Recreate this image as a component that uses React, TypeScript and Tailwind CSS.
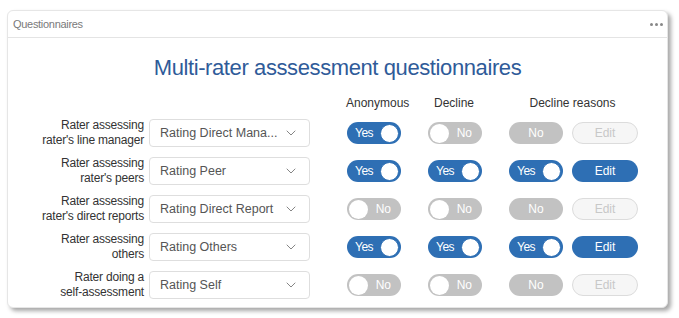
import { ChevronDown } from 'lucide-react';

interface RaterRow {
  id: string;
  label: string[];
  questionnaire: string;
  anonymous: boolean;
  decline: boolean;
  reasons: boolean;
}

const ROWS: RaterRow[] = [
  { id: 'manager', label: ['Rater assessing', "rater's line manager"], questionnaire: 'Rating Direct Mana...', anonymous: true, decline: false, reasons: false },
  { id: 'peers', label: ['Rater assessing', "rater's peers"], questionnaire: 'Rating Peer', anonymous: true, decline: true, reasons: true },
  { id: 'reports', label: ['Rater assessing', "rater's direct reports"], questionnaire: 'Rating Direct Report', anonymous: false, decline: false, reasons: false },
  { id: 'others', label: ['Rater assessing', 'others'], questionnaire: 'Rating Others', anonymous: true, decline: true, reasons: true },
  { id: 'self', label: ['Rater doing a', 'self-assessment'], questionnaire: 'Rating Self', anonymous: false, decline: false, reasons: false },
];

function Toggle({ on }: { on: boolean }) {
  if (on) {
    return (
      <div className="flex items-center justify-between w-[54px] h-[22px] rounded-full bg-[#2e6fb4] pl-[8px] pr-[2px]">
        <span className="text-[12px] text-white tracking-[-0.5px]">Yes</span>
        <span className="w-[19px] h-[19px] rounded-full bg-white border border-[#2e6fb4]"></span>
      </div>
    );
  }
  return (
    <div className="flex items-center justify-between w-[54px] h-[22px] rounded-full bg-[#c2c2c2] pl-[2px] pr-[10px]">
      <span className="w-[19px] h-[19px] rounded-full bg-white"></span>
      <span className="text-[12px] text-white">No</span>
    </div>
  );
}

function ReasonsToggle({ on }: { on: boolean }) {
  if (on) return <Toggle on />;
  return (
    <div className="flex items-center justify-center w-[54px] h-[22px] rounded-full bg-[#c2c2c2]">
      <span className="text-[12px] text-white">No</span>
    </div>
  );
}

function EditButton({ enabled }: { enabled: boolean }) {
  return enabled ? (
    <div className="flex items-center justify-center w-[66px] h-[22px] rounded-full bg-[#2e6fb4] text-[12px] text-white">Edit</div>
  ) : (
    <div className="flex items-center justify-center w-[66px] h-[22px] rounded-full bg-[#f6f6f6] border border-[#dcdcdc] text-[12px] text-[#c8c8c8]">Edit</div>
  );
}

export default function App() {
  return (
    <div className="w-[679px] h-[318px] bg-white pt-[10px] pl-[7px]" style={{ fontFamily: '"Liberation Sans", Arial, sans-serif' }}>
      <div className="w-[661px] h-[298px] bg-white border border-[#e6e6e6] rounded-[6px] shadow-[3px_3px_4px_rgba(0,0,0,0.35)]">
        <div className="flex items-center justify-between h-[27px] border-b border-[#e4e4e4] pl-[5px] pr-[4px]">
          <span className="text-[11px] text-[#7a7a7a] tracking-[-0.3px]">Questionnaires</span>
          <span className="flex gap-[2px]">
            <span className="w-[3px] h-[3px] rounded-full bg-[#888]"></span>
            <span className="w-[3px] h-[3px] rounded-full bg-[#888]"></span>
            <span className="w-[3px] h-[3px] rounded-full bg-[#888]"></span>
          </span>
        </div>
        <h1 className="text-center text-[22px] text-[#2f5b99] mt-[16px] leading-[28px] tracking-[-0.4px]">Multi-rater asssessment questionnaires</h1>
        <div className="flex text-[12px] text-[#333] mt-[13px] h-[16px] leading-[16px]">
          <div className="w-[338px]"></div>
          <div className="w-[54px] text-center">Anonymous</div>
          <div className="w-[27px]"></div>
          <div className="w-[54px] text-center">Decline</div>
          <div className="w-[27px]"></div>
          <div className="w-[129px] text-center">Decline reasons</div>
        </div>
        <div className="flex flex-col mt-[3px]">
          {ROWS.map((r) => (
            <div key={r.id} className="flex items-center h-[38px]">
              <div className="w-[136px] text-right text-[12px] leading-[15px] text-[#333] tracking-[-0.2px]">
                <div>{r.label[0]}</div>
                <div>{r.label[1]}</div>
              </div>
              <div className="ml-[5px] w-[161px] h-[28px] flex items-center justify-between border border-[#dedede] rounded-[4px] pl-[10px] pr-[10px] text-[12.5px] text-[#555]">
                <span className="whitespace-nowrap">{r.questionnaire}</span>
                <ChevronDown size={16} strokeWidth={1.2} className="text-[#666]" />
              </div>
              <div className="ml-[37px]"><Toggle on={r.anonymous} /></div>
              <div className="ml-[27px]"><Toggle on={r.decline} /></div>
              <div className="ml-[27px]"><ReasonsToggle on={r.reasons} /></div>
              <div className="ml-[9px]"><EditButton enabled={r.reasons} /></div>
            </div>
          ))}
        </div>
      </div>
    </div>
  );
}
